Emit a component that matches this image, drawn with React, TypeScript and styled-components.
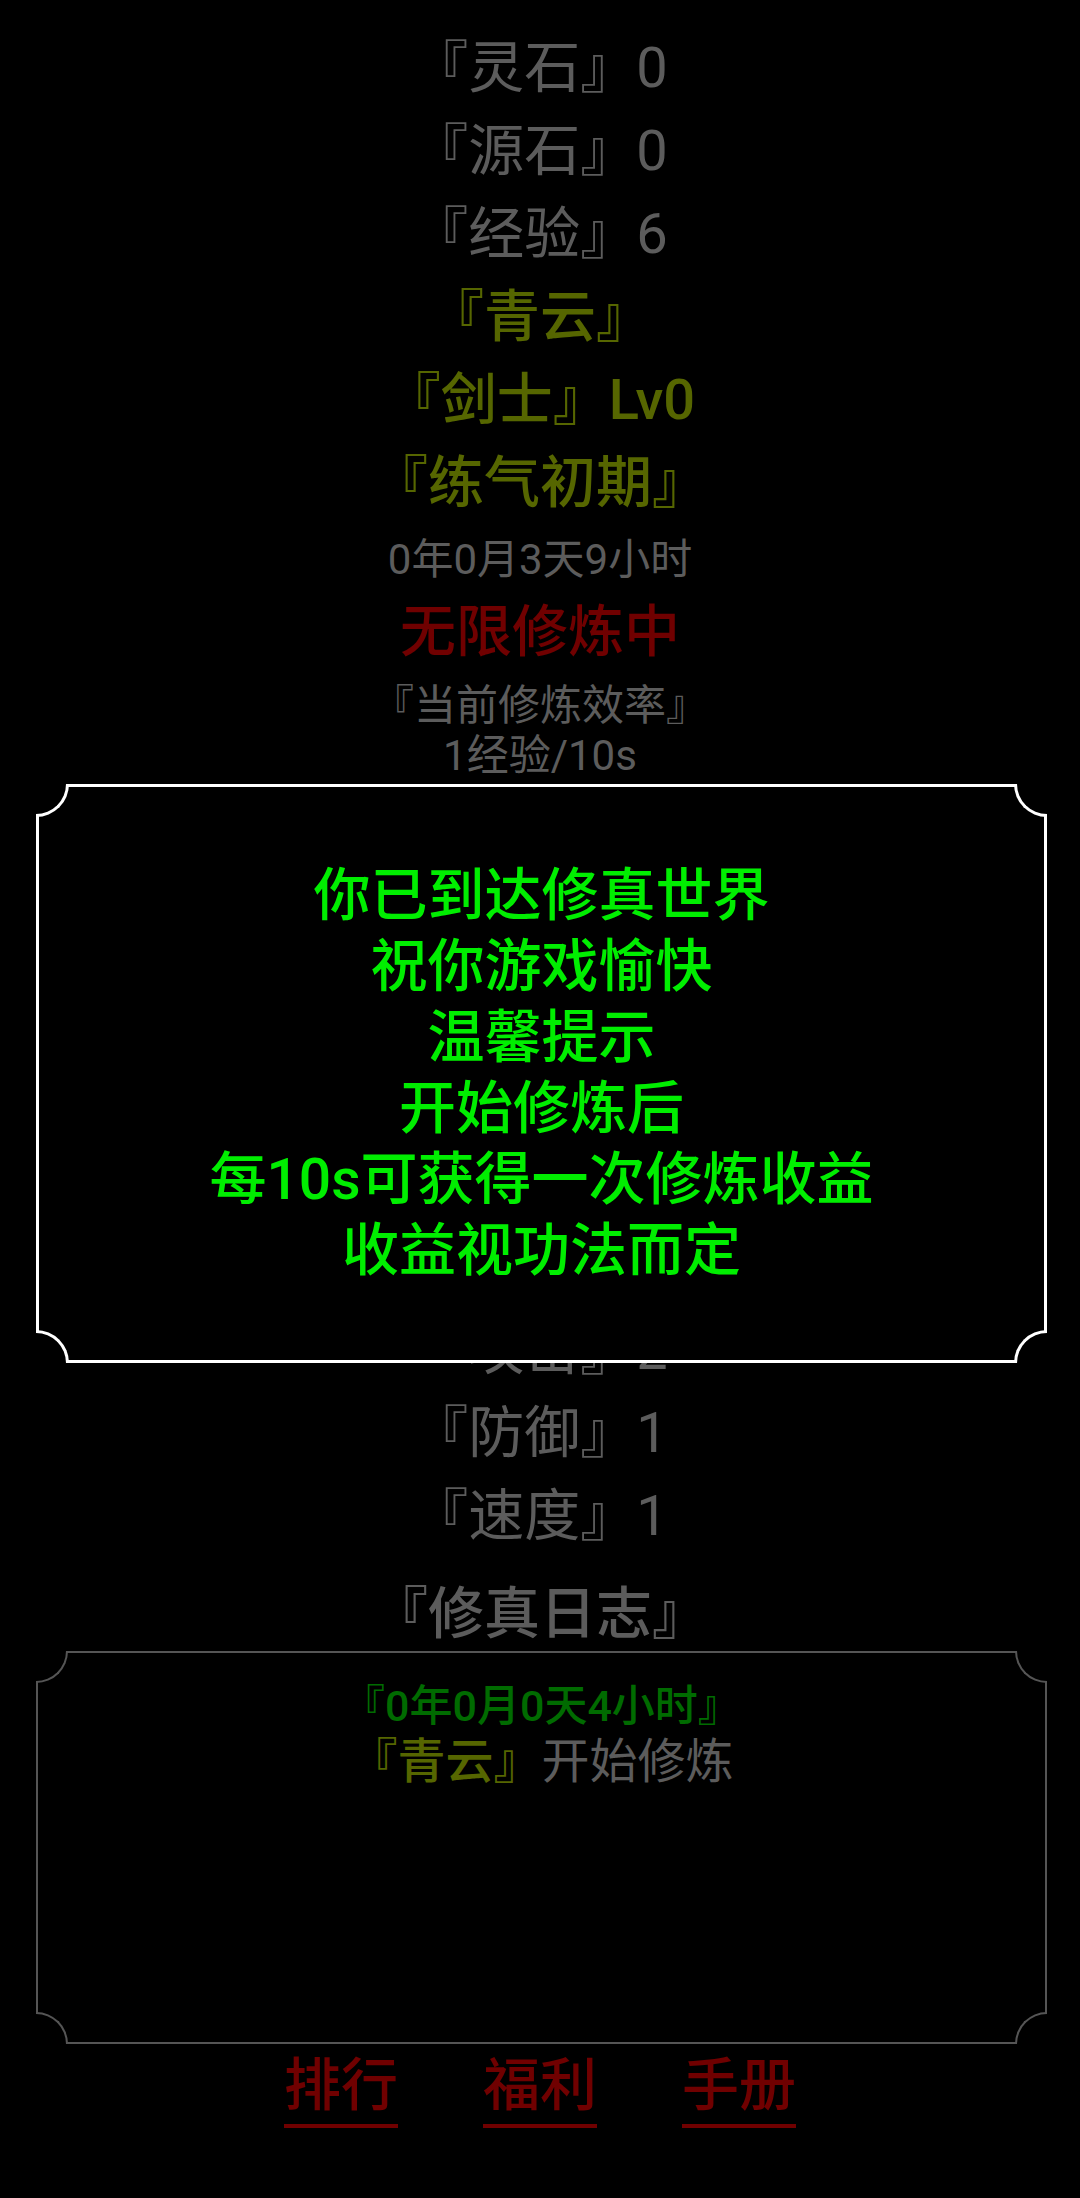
import React from "react";
import styled, { createGlobalStyle } from "styled-components";

const colors = {
  gray: "#5c5c5c",
  olive: "#566600",
  red: "#700000",
  lime: "#00ee00",
  green: "#006b00",
  white: "#ffffff",
  frame: "#555555",
};

type Tone = "gray" | "olive";
type Corner = "tl" | "tr" | "bl" | "br";

const GlobalStyle = createGlobalStyle`
  *, *::before, *::after { box-sizing: border-box; }
  html, body {
    margin: 0;
    padding: 0;
    background: #000;
  }
  body {
    font-family: Roboto, "Noto Sans CJK SC", sans-serif;
  }
`;

const Page = styled.div`
  position: relative;
  width: 1080px;
  min-height: 2198px;
  padding-top: 27px;
  text-align: center;
  background: #000;
`;

const StatRow = styled.div<{ $tone?: Tone; $bold?: boolean }>`
  font-size: 56px;
  line-height: 83px;
  font-weight: ${({ $bold }) => ($bold ? 500 : 400)};
  color: ${({ $tone }) => ($tone === "olive" ? colors.olive : colors.gray)};
`;

const SubLine = styled.div<{ $lh: number; $gap?: number }>`
  font-size: 42px;
  line-height: ${({ $lh }) => $lh}px;
  margin-top: ${({ $gap }) => $gap ?? 0}px;
  color: ${colors.gray};
`;

const StatusLine = styled.div`
  font-size: 56px;
  line-height: 80px;
  font-weight: 500;
  color: ${colors.red};
`;

const SectionTitle = styled.div<{ $gap: number; $lh: number }>`
  font-size: 56px;
  line-height: ${({ $lh }) => $lh}px;
  font-weight: 500;
  margin-top: ${({ $gap }) => $gap}px;
  color: ${colors.gray};
`;

const Notch = styled.span<{ $pos: Corner; $color: string; $weight: number }>`
  position: absolute;
  width: ${({ $weight }) => 30 + $weight}px;
  height: ${({ $weight }) => 30 + $weight}px;
  background: #000;
  ${({ $pos, $color, $weight }) => {
    const v = $pos[0] === "t" ? "top" : "bottom";
    const h = $pos[1] === "l" ? "left" : "right";
    const ov = v === "top" ? "bottom" : "top";
    const oh = h === "left" ? "right" : "left";
    return `
      ${v}: -${$weight}px;
      ${h}: -${$weight}px;
      border-${ov}: ${$weight}px solid ${$color};
      border-${oh}: ${$weight}px solid ${$color};
      border-${ov}-${oh}-radius: ${30 + $weight}px;
    `;
  }}
`;

const Frame = styled.div<{ $color: string; $weight: number }>`
  position: relative;
  width: 1011px;
  background: #000;
  border: ${({ $weight, $color }) => `${$weight}px solid ${$color}`};
`;

const Notches: React.FC<{ color: string; weight: number }> = ({ color, weight }) => (
  <>
    {(["tl", "tr", "bl", "br"] as Corner[]).map((c) => (
      <Notch key={c} $pos={c} $color={color} $weight={weight} />
    ))}
  </>
);

// welcome dialog sits over the attribute list
const Modal = styled(Frame)`
  position: absolute;
  top: 784px;
  left: 36px;
  padding: 73px 0 74px;
  z-index: 10;
`;

const ModalLine = styled.div`
  font-size: 57px;
  line-height: 71px;
  font-weight: 500;
  color: ${colors.lime};
`;

const LogBox = styled(Frame)`
  margin-left: 36px;
  height: 393px;
  padding-top: 28px;
`;

const LogDate = styled.div`
  font-size: 43px;
  line-height: 50px;
  font-weight: 500;
  color: ${colors.green};
`;

const LogMessage = styled.div`
  font-size: 48px;
  line-height: 62px;
  color: ${colors.gray};
`;

const Name = styled.span`
  font-weight: 500;
  color: ${colors.olive};
`;

const Nav = styled.nav`
  display: flex;
  justify-content: center;
  gap: 85px;
  margin-top: 10px;
`;

const NavLink = styled.a`
  display: block;
  font-size: 57px;
  line-height: 64px;
  font-weight: 500;
  color: ${colors.red};
  text-decoration: none;
  padding-bottom: 6px;
  border-bottom: 4px solid ${colors.red};
  cursor: pointer;
`;

const resources = [
  { label: "灵石", value: 0 },
  { label: "源石", value: 0 },
  { label: "经验", value: 6 },
];

const hiddenAttrs = [
  { label: "气血", value: 100 },
  { label: "灵力", value: 10 },
  { label: "神识", value: 1 },
  { label: "根骨", value: 1 },
  { label: "悟性", value: 1 },
  { label: "攻击", value: 2 },
  { label: "防御", value: 1 },
  { label: "速度", value: 1 },
];

const welcome = [
  "你已到达修真世界",
  "祝你游戏愉快",
  "温馨提示",
  "开始修炼后",
  "每10s可获得一次修炼收益",
  "收益视功法而定",
];

export default function App() {
  return (
    <>
      <GlobalStyle />
      <Page>
        {resources.map((r) => (
          <StatRow key={r.label}>
            『{r.label}』{r.value}
          </StatRow>
        ))}
        <StatRow $tone="olive" $bold>
          『青云』
        </StatRow>
        <StatRow $tone="olive" $bold>
          『剑士』Lv0
        </StatRow>
        <StatRow $tone="olive" $bold>
          『练气初期』
        </StatRow>
        <SubLine $lh={64} $gap={3}>
          0年0月3天9小时
        </SubLine>
        <StatusLine>无限修炼中</StatusLine>
        <SubLine $lh={50} $gap={9}>
          『当前修炼效率』
        </SubLine>
        <SubLine $lh={50}>1经验/10s</SubLine>

        <SectionTitle $gap={31} $lh={82}>
          『人物属性』
        </SectionTitle>
        {hiddenAttrs.map((a) => (
          <StatRow key={a.label}>
            『{a.label}』{a.value}
          </StatRow>
        ))}

        <SectionTitle $gap={19} $lh={74}>
          『修真日志』
        </SectionTitle>
        <LogBox $color={colors.frame} $weight={2}>
          <Notches color={colors.frame} weight={2} />
          <LogDate>『0年0月0天4小时』</LogDate>
          <LogMessage>
            <Name>『青云』</Name>开始修炼
          </LogMessage>
        </LogBox>

        <Nav>
          <NavLink>排行</NavLink>
          <NavLink>福利</NavLink>
          <NavLink>手册</NavLink>
        </Nav>

        <Modal $color={colors.white} $weight={3}>
          <Notches color={colors.white} weight={3} />
          {welcome.map((line) => (
            <ModalLine key={line}>{line}</ModalLine>
          ))}
        </Modal>
      </Page>
    </>
  );
}
